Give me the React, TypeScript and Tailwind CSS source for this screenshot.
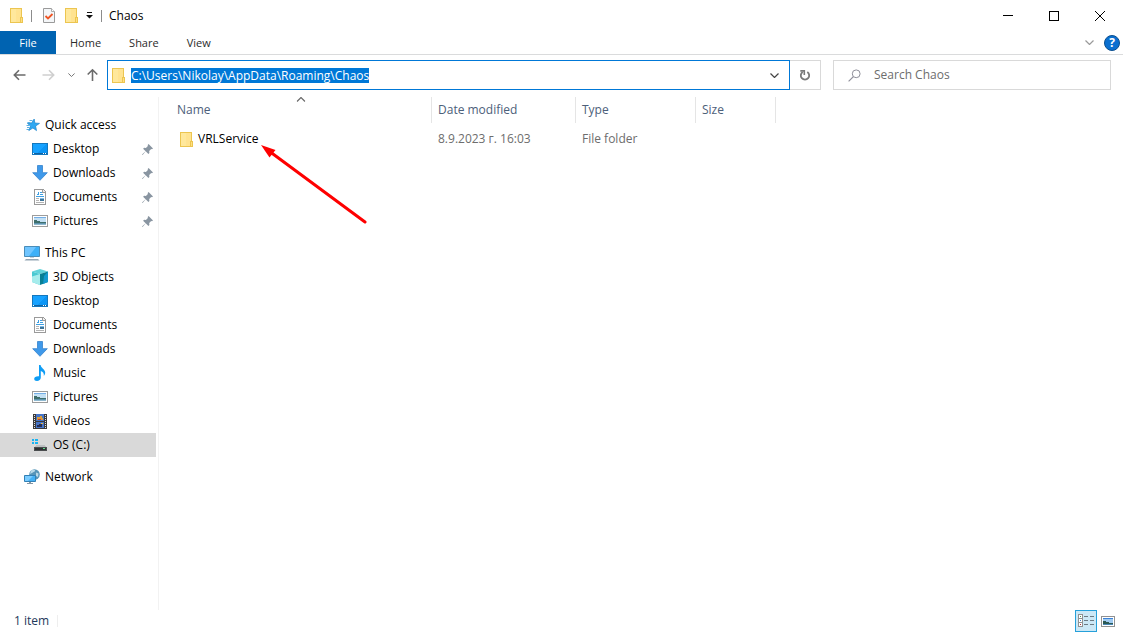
import React, { useEffect, useRef } from "react";

type IconProps = { className?: string };

const FolderIcon = ({ className = "" }: IconProps) => (
  <svg
    className={`h-[15px] w-[13px] shrink-0 ${className}`}
    viewBox="0 0 13 15"
    shapeRendering="crispEdges"
  >
    <path d="M0 0h12v9h1v6H0z" fill="#ecc550" />
    <path d="M1 1h10v8h-1v5H1z" fill="#ffe391" />
    <path d="M1 1h5v13H1z" fill="#ffe89c" />
    <path d="M11 10h1v4h-1z" fill="#ffe082" />
  </svg>
);

const PropertiesIcon = () => (
  <svg className="h-[15px] w-[12px] shrink-0" viewBox="0 0 12 15">
    <path d="M.5.5h8l3 3v11H.5z" fill="#f4f6f8" stroke="#9a9a9a" />
    <path d="M8.5.5v3h3" fill="#fff" stroke="#adadad" />
    <path d="m2.500 8 2.500 2.500L9.500 6" fill="none" stroke="#ee5524" strokeWidth="1.800" />
  </svg>
);

const CustomizeIcon = () => (
  <svg className="h-[7px] w-[7px]" viewBox="0 0 7 7">
    <path d="M1 0h5v1H1zM0 3h7L3.5 6.5z" fill="#111" />
  </svg>
);

const ChevronIcon = ({ className = "" }: IconProps) => (
  <svg className={`shrink-0 ${className}`} viewBox="0 0 9 5" fill="none" stroke="currentColor">
    <path d="m.5.5 4 4 4-4" strokeWidth="1.2" />
  </svg>
);

const ArrowIcon = ({ className = "" }: IconProps) => (
  <svg
    className={`h-[12px] w-[13px] shrink-0 ${className}`}
    viewBox="0 0 13 12"
    fill="none"
    stroke="currentColor"
    strokeWidth="1.6"
  >
    <path d="M1.5 6h11M6 1.2 1.3 6 6 10.8" />
  </svg>
);

const RefreshIcon = () => (
  <svg className="size-3" viewBox="0 0 12 12" fill="none" stroke="#7a7a7a" strokeWidth="1.8">
    <path d="M8.3 2.9a4.2 4.2 0 1 1-4.6 0" />
    <path d="M1.3 1.9h4v4" strokeWidth="1.6" />
  </svg>
);

const SearchIcon = () => (
  <svg className="h-[13px] w-[13px] shrink-0" viewBox="0 0 13 13" fill="none" stroke="#8f8f9a">
    <circle cx="8.2" cy="4.8" r="3.9" />
    <path d="M5.4 7.6.6 12.4" strokeWidth="1.2" />
  </svg>
);

const PinIcon = () => (
  <svg className="h-[11px] w-[11px] shrink-0" viewBox="0 0 11 11">
    <path
      d="M6.6 0 11 4.4l-1 .9-.8-.2-2 2 .2 1.8-1 1-2.7-2.7L.6 11 0 10.4l3.6-3.1L1.1 4.7l1-1 1.8.2 2-2-.2-.9z"
      fill="#8995a1"
    />
  </svg>
);

const StarIcon = () => (
  <svg className="size-4" viewBox="0 0 16 16">
    <path
      d="M10.200 2 10.800 6l4.700.4-3.900 2.600.900 4.600-3.600-2.600L4.800 13.600l1.700-4.500L3.400 6.300l4.200-.3z"
      fill="#2ea8f2"
      stroke="#1a84cc"
      strokeWidth=".7"
    />
    <path d="M5.500 3.500h3M3.500 5.500h3M2.500 8.500h3M3 10.500h2.500M2.500 12.500H5" stroke="#5aaee2" />
  </svg>
);

const DesktopIcon = () => (
  <svg className="size-4" viewBox="0 0 16 16" shapeRendering="crispEdges">
    <path d="M0 2h16v12H0z" fill="#1477bd" />
    <path d="M1 3h14v9H1z" fill="#17a2ff" />
    <path d="M15 3v9H5z" fill="#0b95f5" />
    <path d="M1 12h14v1H1z" fill="#0f62a2" />
    <path d="M1 12h1v1H1zM11 12h1v1h-1zM13 12h1v1h-1z" fill="#fff" />
  </svg>
);

const DownloadIcon = () => (
  <svg className="size-4" viewBox="0 0 16 16">
    <path
      d="M5.5.5h5v7.200h4.800L8 15.300.7 7.700h4.800z"
      fill="#3f99ea"
      stroke="#3583cd"
      strokeWidth=".8"
    />
  </svg>
);

const DocumentIcon = () => (
  <svg className="size-4" viewBox="0 0 16 16" shapeRendering="crispEdges">
    <path d="M2 0h9l3 3v13H2z" fill="#9a9a9a" />
    <path d="M3 1h7v3h3v11H3z" fill="#fff" />
    <path d="M11 1h1v1h1v1h-2z" fill="#f0f0f0" />
    <path d="M6 3h1v3H6zM5 5h1v1H5zM8 3h2v1H8zM8 5h3v1H8zM4 7h8v1H4z" fill="#3fa0e3" />
    <path d="M4 9h3v1H4zM4 11h3v1H4zM4 13h8v1H4z" fill="#b3b3b3" />
    <path d="M8 9h4v1H8z" fill="#7cb9e6" />
    <path d="M8 10h4v2H8z" fill="#3d7397" />
  </svg>
);

const PictureIcon = () => (
  <svg className="size-4" viewBox="0 0 16 16" shapeRendering="crispEdges">
    <path d="M0 2h16v12H0z" fill="#9c9c9c" />
    <path d="M1 3h14v10H1z" fill="#fff" />
    <path d="M2 4h12v8H2z" fill="#c3e0f4" />
    <path d="M2 4h12v1H2z" fill="#75aee6" />
    <path d="M2 7h3v1h3v1h6v1H2z" fill="#3f6f6c" />
    <path d="M2 10h12v1H2z" fill="#5f93ad" />
    <path d="M2 11h12v1H2z" fill="#8fb9d0" />
  </svg>
);

const ComputerIcon = () => (
  <svg className="size-4" viewBox="0 0 16 16">
    <path d="M.5 1.5h15v10H.5z" fill="#3db0f8" stroke="#4a8db9" />
    <path d="M1 2h11L5 11H1z" fill="#70c5ff" />
    <path d="M6 12h4v1H6z" fill="#c3d1db" />
    <path d="M2 14h12l1.500 1.500H.5z" fill="#93a5b3" />
  </svg>
);

const CubeIcon = () => (
  <svg className="size-4" viewBox="0 0 16 16">
    <path d="M8 0l8 2.600L8 5 0 2.600z" fill="#62d3da" />
    <path d="M0 2.600 8 5v11l-8-3z" fill="#4ac9d2" />
    <path d="M0 13V7.500L8 5v11z" fill="#a6ecec" />
    <path d="M16 2.600 8 5v11l8-3z" fill="#087f94" />
    <path d="M16 2.600 12 7l-1 8 5-2z" fill="#1499cd" />
  </svg>
);

const MusicIcon = () => (
  <svg className="size-4" viewBox="0 0 16 16" fill="#0f9df5">
    <path d="M7 0h1.600c.2 3 4.600 4.200 4.600 7.600 0 1.600-.7 2.700-1.400 3.400.5-2.600-.8-4.300-3-5v6.600C8.800 14.700 7 16 5 16c-1.800 0-2.800-1-2.800-2.300C2.200 12 4 11 7 11.200z" />
  </svg>
);

const VideoIcon = () => (
  <svg className="size-4" viewBox="0 0 16 16" shapeRendering="crispEdges">
    <path d="M1 1h14v15H1z" fill="#3b3b3b" />
    <path d="M4 1h8v7H4zM4 9h8v6H4z" fill="#4674c7" />
    <path d="M5 4h3V3h2v2h1v2H5z" fill="#d89b36" />
    <path d="M6 6h3v1H6zM8 12h2v1H8z" fill="#c63d30" />
    <path d="M5 12h2v-1h3v3H5z" fill="#272d50" />
    <path d="M9 10h2v1H9z" fill="#e9b944" />
    <path
      d="M2 2h1v1H2zM2 4h1v1H2zM2 6h1v1H2zM2 8h1v1H2zM2 10h1v1H2zM2 12h1v1H2zM2 14h1v1H2zM13 2h1v1h-1zM13 4h1v1h-1zM13 6h1v1h-1zM13 8h1v1h-1zM13 10h1v1h-1zM13 12h1v1h-1zM13 14h1v1h-1z"
      fill="#e3e3e3"
    />
  </svg>
);

const DriveIcon = () => (
  <svg className="size-4" viewBox="0 0 16 16" shapeRendering="crispEdges">
    <path d="M0 2h2v2H0zM3 2h3v2H3zM0 5h2v2H0zM3 5h3v2H3z" fill="#18b4f2" />
    <path d="M4 8h9l2 3H2z" fill="#bcbfc1" />
    <path d="M2 10h13v4H2z" fill="#4a4d4f" />
    <path d="M3 11h11v2H3z" fill="#2e3032" />
    <path d="M11 11h2v1h-2z" fill="#5fe08a" />
  </svg>
);

const NetworkIcon = () => (
  <svg className="size-4" viewBox="0 0 16 16">
    <circle cx="10.500" cy="5.500" r="5.300" fill="#5795b8" />
    <path d="M7 1.500c2-1.200 5-.8 4 .8L8 4 6 5zM12 3.500l2.500 1-.5 3.500-2-1z" fill="#b9d9e8" />
    <path d="M.5 6.500h11v6H.5z" fill="#45b1f5" stroke="#3280b5" />
    <path d="M1 7h8l-5 5H1z" fill="#7accff" />
    <path d="M5 13h2v1H5zM3 14h6v1H3z" fill="#8496a4" />
  </svg>
);

const DetailsViewIcon = () => (
  <svg className="h-[14px] w-[16px]" viewBox="0 0 16 14" shapeRendering="crispEdges">
    <path d="M0 0h5v13H0z" fill="#919191" />
    <path d="M1 1h3v3H1zM1 5h3v3H1zM1 9h3v3H1z" fill="#fff" />
    <path d="M2 2h1v1H2z" fill="#4c8f55" />
    <path d="M2 6h1v1H2z" fill="#3b7fc4" />
    <path d="M2 10h1v1H2z" fill="#a8323e" />
    <path
      d="M6 2h4v1H6zM12 2h4v1h-4zM6 6h4v1H6zM12 6h4v1h-4zM6 10h4v1H6zM12 10h4v1h-4z"
      fill="#6d7b84"
    />
  </svg>
);

type TreeItem = {
  label: string;
  icon: React.ReactNode;
  pinned?: boolean;
  selected?: boolean;
};

const tree: { root: TreeItem; children: TreeItem[] }[] = [
  {
    root: { label: "Quick access", icon: <StarIcon /> },
    children: [
      { label: "Desktop", icon: <DesktopIcon />, pinned: true },
      { label: "Downloads", icon: <DownloadIcon />, pinned: true },
      { label: "Documents", icon: <DocumentIcon />, pinned: true },
      { label: "Pictures", icon: <PictureIcon />, pinned: true },
    ],
  },
  {
    root: { label: "This PC", icon: <ComputerIcon /> },
    children: [
      { label: "3D Objects", icon: <CubeIcon /> },
      { label: "Desktop", icon: <DesktopIcon /> },
      { label: "Documents", icon: <DocumentIcon /> },
      { label: "Downloads", icon: <DownloadIcon /> },
      { label: "Music", icon: <MusicIcon /> },
      { label: "Pictures", icon: <PictureIcon /> },
      { label: "Videos", icon: <VideoIcon /> },
      { label: "OS (C:)", icon: <DriveIcon />, selected: true },
    ],
  },
  { root: { label: "Network", icon: <NetworkIcon /> }, children: [] },
];

const TreeRow = ({ item, nested }: { item: TreeItem; nested?: boolean }) => (
  <button
    className={`flex h-6 w-full items-center gap-[5px] pr-[3px] text-black ${
      nested ? "pl-8" : "pl-6"
    } ${item.selected ? "bg-[#d9d9d9]" : ""}`}
  >
    {item.icon}
    <span className="flex-1 text-left">{item.label}</span>
    {item.pinned && <PinIcon />}
  </button>
);

const TitleBar = () => (
  <header className="flex h-[31px] items-center">
    <div className="flex flex-1 items-center pl-[10px]">
      <FolderIcon />
      <span className="mr-[11px] ml-2 h-3 w-px bg-[#8c8c8c]" />
      <button aria-label="Properties">
        <PropertiesIcon />
      </button>
      <button aria-label="New folder" className="ml-[10px]">
        <FolderIcon />
      </button>
      <button aria-label="Customize toolbar" className="mx-2">
        <CustomizeIcon />
      </button>
      <span className="mr-[7px] h-3 w-px bg-[#8c8c8c]" />
      <h1 className="text-black">Chaos</h1>
    </div>

    <button aria-label="Minimize" className="flex h-full w-[46px] items-center justify-center">
      <span className="h-px w-[10px] bg-black" />
    </button>
    <button aria-label="Maximize" className="flex h-full w-[46px] items-center justify-center">
      <span className="size-[10px] border border-black" />
    </button>
    <button aria-label="Close" className="flex h-full w-[46px] items-center justify-center">
      <svg className="size-[10px]" viewBox="0 0 10 10" stroke="#000">
        <path d="m0 0 10 10M10 0 0 10" />
      </svg>
    </button>
  </header>
);

const Ribbon = () => (
  <div className="flex h-6 items-stretch border-b border-[#dadbdc] text-[11px] text-[#2b2b2b]">
    <button className="w-14 bg-[#0063b1] text-white">File</button>
    {["Home", "Share", "View"].map((tab) => (
      <button key={tab} className="px-[14px]">
        {tab}
      </button>
    ))}
    <div className="flex flex-1 items-center justify-end gap-[10px] pr-[3px]">
      <button aria-label="Expand the ribbon" className="text-[#9a9a9a]">
        <ChevronIcon className="h-[5px] w-[9px]" />
      </button>
      <button
        aria-label="Help"
        className="size-4 rounded-full border border-[#0b4f8f] bg-[#0a6fd0] text-[12px] leading-[14px] font-bold text-white"
      >
        ?
      </button>
    </div>
  </div>
);

const AddressRow = () => {
  const addressRef = useRef<HTMLInputElement>(null);

  useEffect(() => {
    addressRef.current?.focus();
    addressRef.current?.select();
  }, []);

  return (
    <div className="flex h-[42px] items-center pr-3 pb-[2px] pl-[13px]">
      <button aria-label="Back" className="text-[#6b6b6b]">
        <ArrowIcon />
      </button>
      <button aria-label="Forward" className="ml-4 text-[#cfcfcf]">
        <ArrowIcon className="rotate-180" />
      </button>
      <button aria-label="Recent locations" className="ml-[13px] text-[#6b6b6b]">
        <ChevronIcon className="h-[4px] w-[7px]" />
      </button>
      <button aria-label="Up" className="ml-[11px] text-[#6b6b6b]">
        <ArrowIcon className="rotate-90" />
      </button>

      <div className="ml-2 flex h-[30px] flex-1 items-center border border-[#0078d7] pr-[10px] pl-1">
        <FolderIcon />
        <input
          ref={addressRef}
          aria-label="Address"
          className="ml-[6px] h-[15px] min-w-0 flex-1 leading-[15px] text-black outline-none selection:bg-[#0078d7] selection:text-white"
          defaultValue="C:\Users\Nikolay\AppData\Roaming\Chaos"
          spellCheck={false}
        />
        <button aria-label="Previous locations" className="text-[#444]">
          <ChevronIcon className="h-[5px] w-[9px]" />
        </button>
      </div>
      <button
        aria-label="Refresh"
        className="flex h-[30px] w-[31px] items-center justify-center border border-l-0 border-[#d9d9d9]"
      >
        <RefreshIcon />
      </button>

      <label className="ml-3 flex h-[30px] w-[278px] items-center gap-[13px] border border-[#d9d9d9] pl-[14px]">
        <SearchIcon />
        <input
          type="text"
          aria-label="Search Chaos"
          placeholder="Search Chaos"
          className="min-w-0 flex-1 outline-none placeholder:text-[#6d6d6d]"
        />
      </label>
    </div>
  );
};

const FileList = () => (
  <main className="relative flex-1 pl-3">
    <table className="table-fixed border-separate border-spacing-0 text-left">
      <thead>
        <tr className="h-[26px] text-[#4c607a] *:border-r *:border-[#e5e5e5] *:pl-[6px] *:font-normal">
          <th className="relative w-[261px]">
            Name
            <ChevronIcon className="absolute top-0 left-1/2 h-[5px] w-[9px] -translate-x-1/2 rotate-180 text-[#6a6a6a]" />
          </th>
          <th className="w-[144px]">Date modified</th>
          <th className="w-[120px]">Type</th>
          <th className="w-[80px]">Size</th>
        </tr>
      </thead>
      <tbody>
        <tr className="h-8 text-[#6d6d6d] *:pl-[6px]">
          <td>
            <div className="flex items-center gap-[5px] pl-[3px] text-black">
              <FolderIcon />
              VRLService
            </div>
          </td>
          <td>8.9.2023 г. 16:03</td>
          <td>File folder</td>
          <td />
        </tr>
      </tbody>
    </table>

    {/* Callout arrow pointing at the folder */}
    <svg
      className="absolute top-12 left-[102px] h-[80px] w-[106px]"
      viewBox="0 0 106 80"
      aria-hidden="true"
    >
      <path d="M10 7.500 104 77" stroke="#fe0000" strokeWidth="3" strokeLinecap="round" />
      <path d="M0 0 14.500 5 8.500 12.500z" fill="#fe0000" />
    </svg>
  </main>
);

const StatusBar = () => (
  <footer className="flex h-[22px] items-center pl-[14px] text-[#1e395b]">
    <span>1 item</span>
    <span className="ml-2 h-3 w-px bg-[#eeeeee]" />
    <div className="flex flex-1 items-center justify-end gap-1 pr-2">
      <button
        aria-label="Details view"
        className="flex size-[22px] items-center justify-center border border-[#26a0da] bg-[#cce8f6]"
      >
        <DetailsViewIcon />
      </button>
      <button aria-label="Large icons view">
        <svg className="h-[11px] w-[14px]" viewBox="0 0 14 11" shapeRendering="crispEdges">
          <path d="M0 0h14v11H0z" fill="#919191" />
          <path d="M1 1h12v9H1z" fill="#fff" />
          <path d="M2 2h10v7H2z" fill="#9fcaf0" />
          <path d="M2 2h10v1H2z" fill="#3c82d8" />
          <path d="M2 5h3v1h3v1h4v1H2z" fill="#2b5954" />
          <path d="M2 8h10v1H2z" fill="#4a88b5" />
        </svg>
      </button>
    </div>
  </footer>
);

const App = () => {
  return (
    <div className="flex min-h-screen flex-col bg-white font-['Open_Sans','Noto_Sans',sans-serif] text-[12px] leading-4">
      <TitleBar />
      <Ribbon />
      <AddressRow />
      <div className="flex flex-1">
        <nav className="w-[159px] border-r border-[#f2f2f2] pt-4 pr-[2px]">
          {tree.map(({ root, children }) => (
            <div key={root.label} className="mb-2">
              <TreeRow item={root} />
              {children.map((item) => (
                <TreeRow key={item.label} item={item} nested />
              ))}
            </div>
          ))}
        </nav>
        <FileList />
      </div>
      <StatusBar />
    </div>
  );
};

export default App;
